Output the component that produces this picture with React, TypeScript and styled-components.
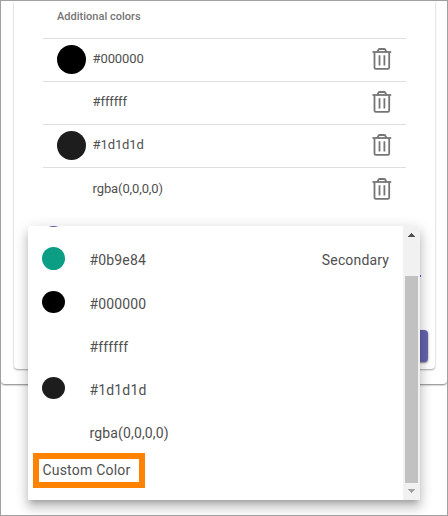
import React from "react";
import styled, { createGlobalStyle } from "styled-components";

const GlobalStyle = createGlobalStyle`
  * { box-sizing: border-box; }
  body { margin: 0; background: #fff; font-family: Roboto, "Liberation Sans", sans-serif; color: #505050; }
`;

const Frame = styled.div`
  position: relative;
  width: 448px;
  height: 516px;
  overflow: hidden;
  border: 1px solid #a0a0a0;
  background: #fff;
`;

const OuterCard = styled.section`
  height: 383px;
  padding: 0 12px 0 13px;
  border-radius: 0 0 4px 4px;
  box-shadow: 0 1px 2px rgba(0, 0, 0, 0.5);
`;

const InnerCard = styled.div`
  display: flex;
  flex-direction: column;
  height: 368px;
  padding: 0 7px 7px 29px;
  border-radius: 0 0 4px 4px;
  box-shadow: 0 1px 2px rgba(0, 0, 0, 0.36);
`;

const Heading = styled.h2`
  margin: 0;
  height: 37px;
  padding: 8px 0 0 14px;
  font-size: 11px;
  line-height: 15px;
  font-weight: 500;
  letter-spacing: 0.02px;
  color: #757575;
`;

const ColorRow = styled.div<{ $drop?: number }>`
  display: flex;
  align-items: flex-start;
  width: 363px;
  height: 43px;
  padding: ${(p) => 6 + (p.$drop ?? 0)}px 14px 0;
  border-top: 1px solid #dedede;
`;

const Swatch = styled.span<{ $color: string; $w: number; $h: number }>`
  flex: none;
  width: ${(p) => p.$w}px;
  height: ${(p) => p.$h}px;
  border-radius: 50%;
  background: ${(p) => p.$color};
`;

const ColorName = styled.span`
  flex: 1;
  padding-left: 6.6px;
  font-size: 13px;
  line-height: 28px;
  letter-spacing: -0.12px;
`;

const TrashSvg = styled.svg`
  display: block;
  width: 20px;
  height: 23px;
  margin-top: 3px;
`;

const SaveButton = styled.button`
  width: 90px;
  height: 32px;
  margin: auto 0 0 auto;
  border: 0;
  border-radius: 4px;
  background: #6463ae;
  box-shadow: 0 1px 2px rgba(0, 0, 0, 0.5);
`;

const FieldMark = styled.span`
  position: absolute;
  left: 418px;
  top: 274px;
  width: 2px;
  height: 2px;
  background: #5551a8;
`;

const Dropdown = styled.div`
  position: absolute;
  left: 27px;
  top: 225px;
  display: flex;
  width: 392px;
  height: 274px;
  overflow: hidden;
  border-radius: 4px 4px 2px 2px;
  background: #fff;
`;

const DropdownShadow = styled.div`
  position: absolute;
  left: 27px;
  top: 225px;
  width: 392px;
  height: 274px;
  border-radius: 4px 4px 2px 2px;
  box-shadow: 0 5px 5px -3px rgba(0, 0, 0, 0.2), 0 8px 10px 1px rgba(0, 0, 0, 0.14),
    0 3px 14px 2px rgba(0, 0, 0, 0.12);
`;

const Options = styled.div`
  flex: 1;
  display: flex;
  flex-direction: column;
`;

const ScrolledOption = styled.div`
  height: 22px;
  padding-left: 14px;
  margin-top: -21px;
`;

const Option = styled.div`
  display: flex;
  align-items: flex-start;
  height: 43px;
  padding: 21px 14px 0;

  &:nth-child(2) {
    height: 44px;
    margin-top: -1px;
  }
`;

const OptionText = styled.span`
  font-size: 14px;
  line-height: 26px;
  letter-spacing: 0.15px;
  white-space: nowrap;
`;

const OptionName = styled(OptionText)`
  flex: 1;
  padding-left: 24.5px;
`;

const CustomOption = styled.div`
  width: 112px;
  height: 35px;
  margin: 11px 0 0 5px;
  padding-left: 3.4px;
  border: 6px solid #ff8200;
  font-size: 14px;
  line-height: 22px;
  letter-spacing: 0.22px;
  white-space: nowrap;
`;

const Scrollbar = styled.div`
  display: flex;
  flex-direction: column;
  align-items: center;
  width: 17px;
  background: #f1f1f1;
`;

const ArrowSvg = styled.svg`
  display: block;
  flex: none;
  width: 17px;
  height: 17px;
`;

const Thumb = styled.div`
  width: 13px;
  height: 207px;
  margin-top: 33px;
  background: #c1c1c1;
`;

const Trash = () => (
  <TrashSvg viewBox="0 0 20 23" fill="none" stroke="#757575">
    <path d="M0.5 4H19.2" strokeWidth="1.8" />
    <path d="M5.4 3.8L6.4 1.8Q6.8 1 7.8 1H12Q13 1 13.4 1.8L14.4 3.8" strokeWidth="1.8" />
    <path d="M2.5 4.5V19.4Q2.5 20.8 3.9 20.8H15.8Q17.2 20.8 17.2 19.4V4.5" strokeWidth="1.8" />
    <path d="M7.5 7.3V17.6M12.4 7.3V17.6" strokeWidth="1.8" />
  </TrashSvg>
);

const savedColors = [
  { name: "#000000", swatch: "#000000" },
  { name: "#ffffff", swatch: "#ffffff" },
  { name: "#1d1d1d", swatch: "#1d1d1d" },
  { name: "rgba(0,0,0,0)", swatch: "rgba(0,0,0,0)", drop: 1 },
];

const options = [
  { name: "#0b9e84", swatch: "#0b9e84", role: "Secondary", height: 23 },
  ...savedColors.map((c) => ({ name: c.name, swatch: c.swatch, role: "", height: 22 })),
];

export default function App() {
  return (
    <Frame>
      <GlobalStyle />
      <OuterCard>
        <InnerCard>
          <Heading>Additional colors</Heading>
          {savedColors.map((c) => (
            <ColorRow key={c.name} $drop={c.drop}>
              <Swatch $color={c.swatch} $w={29} $h={29} />
              <ColorName>{c.name}</ColorName>
              <Trash />
            </ColorRow>
          ))}
          <SaveButton aria-label="Save" />
        </InnerCard>
      </OuterCard>
      <DropdownShadow />
      <FieldMark />
      <Dropdown>
        <Options>
          <ScrolledOption>
            <Swatch as="div" $color="#5c5b9f" $w={23} $h={22} />
          </ScrolledOption>
          {options.map((o) => (
            <Option key={o.name}>
              <Swatch $color={o.swatch} $w={23} $h={o.height} />
              <OptionName>{o.name}</OptionName>
              <OptionText>{o.role}</OptionText>
            </Option>
          ))}
          <CustomOption>Custom Color</CustomOption>
        </Options>
        <Scrollbar>
          <ArrowSvg viewBox="0 0 17 17" shapeRendering="crispEdges">
            <path d="M5 11L8.5 7L12 11Z" fill="#505050" />
          </ArrowSvg>
          <Thumb />
          <ArrowSvg viewBox="0 0 17 17" shapeRendering="crispEdges">
            <path d="M5 6L8.5 10L12 6Z" fill="#a3a3a3" />
          </ArrowSvg>
        </Scrollbar>
      </Dropdown>
    </Frame>
  );
}
